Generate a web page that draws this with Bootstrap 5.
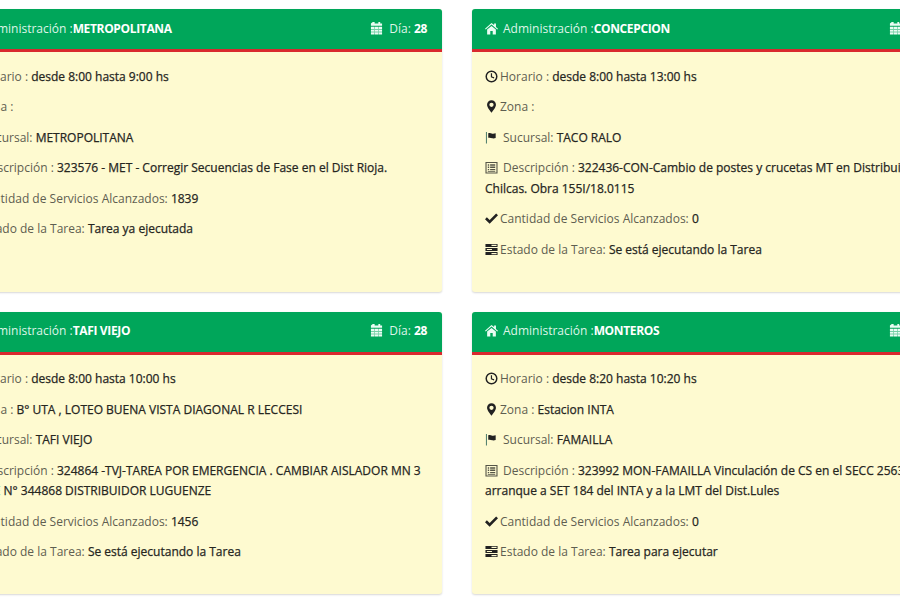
<!DOCTYPE html>
<html lang="es">
<head>
<meta charset="utf-8">
<title>Tareas</title>
<link href="https://cdn.jsdelivr.net/npm/bootstrap@5.3.0/dist/css/bootstrap.min.css" rel="stylesheet">
<style>
html,body{margin:0;height:600px;overflow:hidden;background:#fff}
body{font-family:"Open Sans","Noto Sans",sans-serif;font-size:12px;line-height:20.5px;color:#555}
.tablero{display:grid;grid-template-columns:491px 489px;grid-auto-rows:282.5px;column-gap:30px;row-gap:20px;margin:9px 0 0 -49px;width:1010px}
.tarea{background:#fefad0;border:0;border-radius:3px;box-shadow:0 1px 2px rgba(0,0,0,.16);overflow:hidden;--bs-card-bg:#fefad0}
.tarea-cab{flex:0 0 43px;background:#00a65a;border-bottom:3px solid #d9292e;padding:0 15px 0 13px;color:#dff5e8;display:flex;align-items:center;justify-content:space-between;font-size:12px}
.tarea-cab b{color:#fff;font-weight:700;letter-spacing:-.35px}
.tarea-cab svg{fill:#eafcf3}
.tarea-cuerpo{padding:14.500px 13px 0}
.tarea-cuerpo p{margin:0 0 10px;color:#5e5e50}
.tarea-cuerpo p b{font-weight:500;color:#26261f;-webkit-text-stroke:.25px #26261f}
.ico{width:13px;height:13px;fill:#222;vertical-align:-2px;margin-right:2px}
.ico-ancho{margin-right:5px}
.cab-ico{width:13px;height:13px;vertical-align:-2px;margin-right:5px}
.cal-ico{margin-right:6px}
</style>
</head>
<body>
<svg width="0" height="0" class="d-none">
<defs>
<symbol id="i-home" viewBox="0 0 14 14"><path d="M7 1 0 7.200l.8.900L7 2.800l6.200 5.300.8-.9-2.200-1.900V1.600h-2v1.500zM2.300 8.200V13.400h3.400V9.600h2.600v3.800h3.400V8.200L7 4.200z"/></symbol>
<symbol id="i-cal" viewBox="0 0 14 14"><path fill-rule="evenodd" d="M3 0h2v1.500h4V0h2v1.500h2V4H1V1.500zM1 5h12v8.500H1zm0 2.900v.4h12v-.4zm0 2.700v.4h12v-.4zM4.800 5v8.500h.4V5zm4 0v8.500h.4V5z"/></symbol>
<symbol id="i-clock" viewBox="0 0 14 14"><path fill-rule="evenodd" d="M7 .5a6.500 6.500 0 1 1 0 13 6.500 6.500 0 0 1 0-13zm0 1.600a4.900 4.900 0 1 0 0 9.800 4.900 4.900 0 0 0 0-9.800zM6.300 3.500h1.300v3.400l2.400 1-.5 1.200-3.200-1.400z"/></symbol>
<symbol id="i-pin" viewBox="0 0 14 14"><path fill-rule="evenodd" d="M7 .3a4.800 4.800 0 0 1 4.800 4.800C11.800 8 8.500 11.600 7 13.800 5.500 11.600 2.200 8 2.200 5.100A4.800 4.800 0 0 1 7 .3zm0 2.600a2.300 2.300 0 1 0 0 4.600 2.300 2.300 0 0 0 0-4.600z"/></symbol>
<symbol id="i-flag" viewBox="0 0 14 14"><path fill="#4d7d6c" d="M1 1h1.100v12.500H1z"/><path d="M3.500 2.500c1.800-.8 3 .2 4.300.5 1.300.2 2.600-.1 3.700-.5v5c-1.200.5-2.500.6-3.700.4-1.300-.3-2.500-1.200-4.300-.5z"/></symbol>
<symbol id="i-list" viewBox="0 0 14 14"><path fill="#555548" fill-rule="evenodd" d="M.5 1h13v12.500H.500zm1.200 1.200v10.100h10.600V2.200zM3 3.500h1.500V5H3zm2.500 0H11V5H5.500zM3 6h1.500v1.500H3zm2.500 0H11v1.500H5.500zM3 8.500h1.500V10H3zm2.500 0H11V10H5.500zM3 11h8v.8H3z"/></symbol>
<symbol id="i-ok" viewBox="0 0 14 14"><path d="M5 12.600 0 7.700l2-2 3 2.900L12 1.500l2 2z"/></symbol>
<symbol id="i-tasks" viewBox="0 0 14 14"><path fill-rule="evenodd" d="M.5 1h13v3.300H.500zm6.500 1v1.200h5.500V2zM.5 5.300h13v3.400H.500zM2 6.400v1.200h5.500V6.400zM.5 9.700h13V13H.500zm6.500 1.100V12h5.500v-1.200z"/></symbol>
</defs>
</svg>

<main class="tablero">

<article class="card tarea">
<header class="tarea-cab"><span><svg class="cab-ico"><use href="#i-home"/></svg>Administración :<b>METROPOLITANA</b></span><span><svg class="cab-ico cal-ico"><use href="#i-cal"/></svg>Día: <b>28</b></span></header>
<div class="tarea-cuerpo">
<p><svg class="ico"><use href="#i-clock"/></svg>Horario : <b>desde 8:00 hasta 9:00 hs</b></p>
<p><svg class="ico"><use href="#i-pin"/></svg>Zona : </p>
<p><svg class="ico ico-ancho"><use href="#i-flag"/></svg>Sucursal: <b>METROPOLITANA</b></p>
<p><svg class="ico ico-ancho"><use href="#i-list"/></svg>Descripción : <b>323576 - MET - Corregir Secuencias de Fase en el Dist Rioja.</b></p>
<p><svg class="ico"><use href="#i-ok"/></svg>Cantidad de Servicios Alcanzados: <b>1839</b></p>
<p><svg class="ico"><use href="#i-tasks"/></svg>Estado de la Tarea: <b>Tarea ya ejecutada</b></p>
</div>
</article>

<article class="card tarea">
<header class="tarea-cab"><span><svg class="cab-ico"><use href="#i-home"/></svg>Administración :<b>CONCEPCION</b></span><span><svg class="cab-ico cal-ico"><use href="#i-cal"/></svg>Día: <b>28</b></span></header>
<div class="tarea-cuerpo">
<p><svg class="ico"><use href="#i-clock"/></svg>Horario : <b>desde 8:00 hasta 13:00 hs</b></p>
<p><svg class="ico"><use href="#i-pin"/></svg>Zona : </p>
<p><svg class="ico ico-ancho"><use href="#i-flag"/></svg>Sucursal: <b>TACO RALO</b></p>
<p><svg class="ico ico-ancho"><use href="#i-list"/></svg>Descripción : <b>322436-CON-Cambio de postes y crucetas MT en Distribuidor<br>Chilcas. Obra 155I/18.0115</b></p>
<p><svg class="ico"><use href="#i-ok"/></svg>Cantidad de Servicios Alcanzados: <b>0</b></p>
<p><svg class="ico"><use href="#i-tasks"/></svg>Estado de la Tarea: <b>Se está ejecutando la Tarea</b></p>
</div>
</article>

<article class="card tarea">
<header class="tarea-cab"><span><svg class="cab-ico"><use href="#i-home"/></svg>Administración :<b>TAFI VIEJO</b></span><span><svg class="cab-ico cal-ico"><use href="#i-cal"/></svg>Día: <b>28</b></span></header>
<div class="tarea-cuerpo">
<p><svg class="ico"><use href="#i-clock"/></svg>Horario : <b>desde 8:00 hasta 10:00 hs</b></p>
<p><svg class="ico"><use href="#i-pin"/></svg>Zona : <b>B° UTA , LOTEO BUENA VISTA DIAGONAL R LECCESI</b></p>
<p><svg class="ico ico-ancho"><use href="#i-flag"/></svg>Sucursal: <b>TAFI VIEJO</b></p>
<p><svg class="ico ico-ancho"><use href="#i-list"/></svg>Descripción : <b>324864 -TVJ-TAREA POR EMERGENCIA . CAMBIAR AISLADOR MN 3<br>POSTE N° 344868 DISTRIBUIDOR LUGUENZE</b></p>
<p><svg class="ico"><use href="#i-ok"/></svg>Cantidad de Servicios Alcanzados: <b>1456</b></p>
<p><svg class="ico"><use href="#i-tasks"/></svg>Estado de la Tarea: <b>Se está ejecutando la Tarea</b></p>
</div>
</article>

<article class="card tarea">
<header class="tarea-cab"><span><svg class="cab-ico"><use href="#i-home"/></svg>Administración :<b>MONTEROS</b></span><span><svg class="cab-ico cal-ico"><use href="#i-cal"/></svg>Día: <b>28</b></span></header>
<div class="tarea-cuerpo">
<p><svg class="ico"><use href="#i-clock"/></svg>Horario : <b>desde 8:20 hasta 10:20 hs</b></p>
<p><svg class="ico"><use href="#i-pin"/></svg>Zona : <b>Estacion INTA</b></p>
<p><svg class="ico ico-ancho"><use href="#i-flag"/></svg>Sucursal: <b>FAMAILLA</b></p>
<p><svg class="ico ico-ancho"><use href="#i-list"/></svg>Descripción : <b>323992 MON-FAMAILLA Vinculación de CS en el SECC 2563<br>arranque a SET 184 del INTA y a la LMT del Dist.Lules</b></p>
<p><svg class="ico"><use href="#i-ok"/></svg>Cantidad de Servicios Alcanzados: <b>0</b></p>
<p><svg class="ico"><use href="#i-tasks"/></svg>Estado de la Tarea: <b>Tarea para ejecutar</b></p>
</div>
</article>

</main>
<script src="https://cdn.jsdelivr.net/npm/bootstrap@5.3.0/dist/js/bootstrap.bundle.min.js"></script>
</body>
</html>
